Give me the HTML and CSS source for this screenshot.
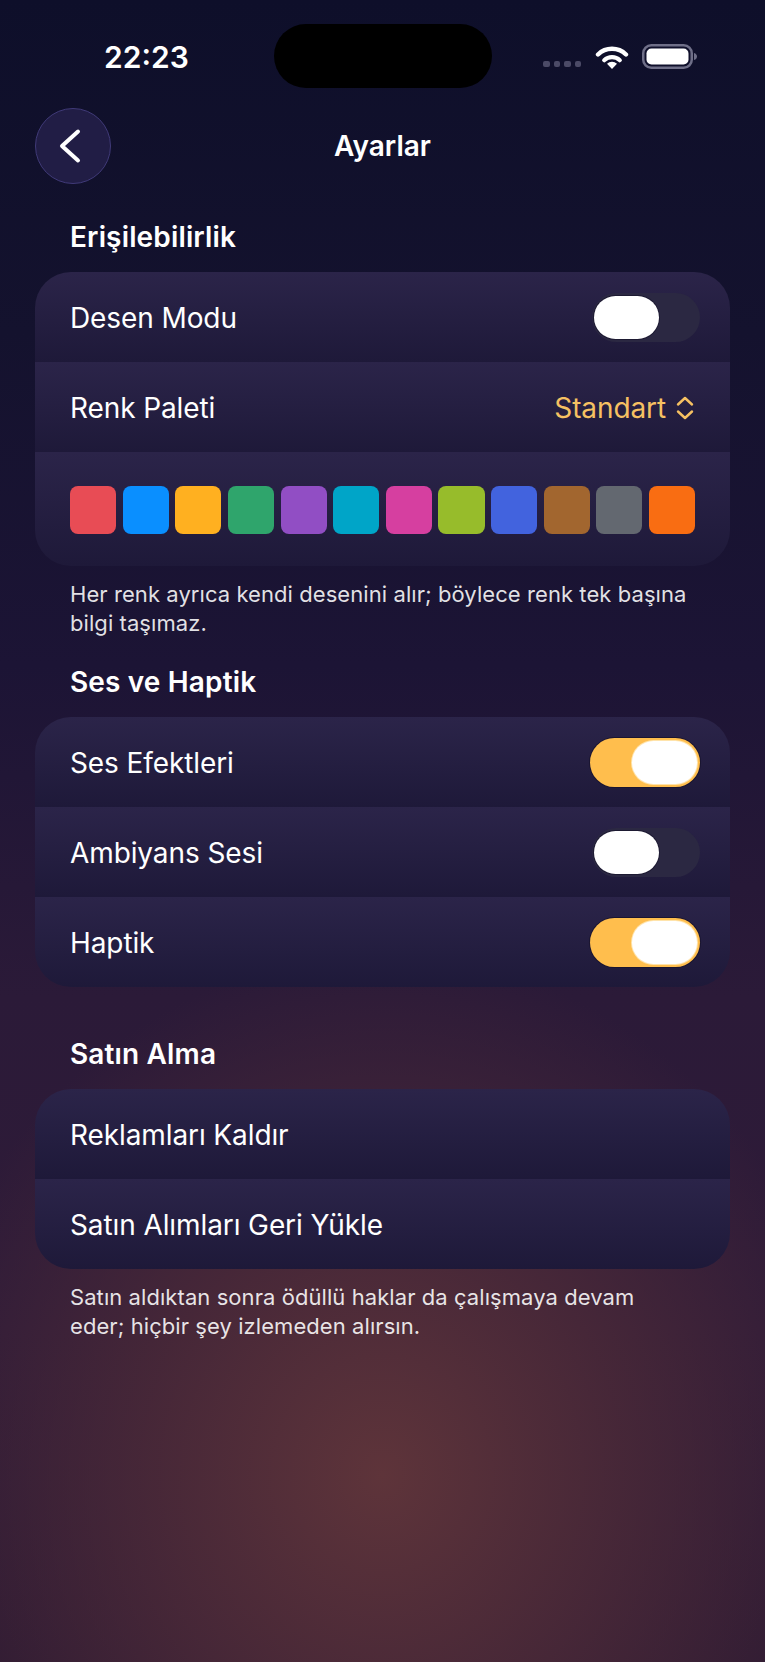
FILE: index.html
```html
<!DOCTYPE html>
<html lang="tr">
<head>
    <meta charset="UTF-8">
    <meta name="viewport" content="width=device-width, initial-scale=1.0">
    <title>Ayarlar</title>
    <link rel="stylesheet" href="styles.css">
</head>
<body>
    <div class="screen">
        <div class="status-bar">
            <div class="time">22:23</div>
            <div class="island"></div>
            <div class="signal"><i></i><i></i><i></i><i></i></div>
            <svg class="wifi" width="34" height="24" viewBox="0 0 34 24">
                <path d="M3 9.5A20 20 0 0 1 31 9.5" fill="none" stroke="#fff" stroke-width="4.4" stroke-linecap="round"/>
                <path d="M9.2 15.2A11.5 11.5 0 0 1 24.8 15.2" fill="none" stroke="#fff" stroke-width="4.2" stroke-linecap="round"/>
                <path d="M17 24L12 18.8A7.4 7.4 0 0 1 22 18.8Z" fill="#fff"/>
            </svg>
            <svg class="battery" width="55" height="26" viewBox="0 0 55 26">
                <rect x="1.250" y="1.250" width="48.500" height="22.500" rx="8" fill="none" stroke="#6f6f88" stroke-width="2.500"/>
                <rect x="4.500" y="4.500" width="42" height="16" rx="5" fill="#fff"/>
                <path d="M52 9c2 .5 3 2 3 3.500s-1 3-3 3.500z" fill="#6f6f88"/>
            </svg>
        </div>

        <div class="nav">
            <button class="back-button">
                <svg width="24" height="36" viewBox="0 0 24 36">
                    <path d="M20 3.500L4 18L20 32.500" fill="none" stroke="#fff" stroke-width="4" stroke-linecap="round" stroke-linejoin="round"/>
                </svg>
            </button>
            <div class="nav-title">Ayarlar</div>
            <div class="nav-spacer"></div>
        </div>

        <section class="section">
            <h2 class="section-title">Erişilebilirlik</h2>
            <div class="card">
                <div class="row">
                    <span>Desen Modu</span>
                    <div class="toggle"><div class="knob"></div></div>
                </div>
                <div class="row">
                    <span>Renk Paleti</span>
                    <div class="picker">
                        <span>Standart</span>
                        <svg width="18" height="24" viewBox="0 0 18 24">
                            <path d="M2 8.500L9 2L16 8.500M2 15.500L9 22L16 15.500" fill="none" stroke="#f6c162" stroke-width="2.400" stroke-linecap="round" stroke-linejoin="round"/>
                        </svg>
                    </div>
                </div>
                <div class="swatches">
                    <div class="swatch red"></div>
                    <div class="swatch blue"></div>
                    <div class="swatch amber"></div>
                    <div class="swatch green"></div>
                    <div class="swatch purple"></div>
                    <div class="swatch cyan"></div>
                    <div class="swatch pink"></div>
                    <div class="swatch lime"></div>
                    <div class="swatch indigo"></div>
                    <div class="swatch brown"></div>
                    <div class="swatch gray"></div>
                    <div class="swatch orange"></div>
                </div>
            </div>
            <p class="note">Her renk ayrıca kendi desenini alır; böylece renk tek başına bilgi taşımaz.</p>
        </section>

        <section class="section section-bare">
            <h2 class="section-title">Ses ve Haptik</h2>
            <div class="card">
                <div class="row">
                    <span>Ses Efektleri</span>
                    <div class="toggle on"><div class="knob"></div></div>
                </div>
                <div class="row">
                    <span>Ambiyans Sesi</span>
                    <div class="toggle"><div class="knob"></div></div>
                </div>
                <div class="row">
                    <span>Haptik</span>
                    <div class="toggle on"><div class="knob"></div></div>
                </div>
            </div>
        </section>

        <section class="section">
            <h2 class="section-title">Satın Alma</h2>
            <div class="card">
                <div class="row"><span>Reklamları Kaldır</span></div>
                <div class="row"><span>Satın Alımları Geri Yükle</span></div>
            </div>
            <p class="note">Satın aldıktan sonra ödüllü haklar da çalışmaya devam eder; hiçbir şey izlemeden alırsın.</p>
        </section>
    </div>
</body>
</html>
```

FILE: styles.css
```css
* {box-sizing: border-box;}
body {
    margin: 0;
    background: #0f0f2a;
    font-family: Inter, "Noto Sans", sans-serif;
    color: #fff;
}
.screen {
    width: 765px;
    height: 1662px;
    overflow: hidden;
    background:
        radial-gradient(ellipse 480px 520px at 382px 1475px, rgba(94, 52, 58, 1) 0%, rgba(76, 42, 56, 0.8) 50%, rgba(60, 32, 56, 0) 100%),
        linear-gradient(180deg, #0e0f2a 0%, #14122e 20%, #1c1435 40%, #2b1a38 60%, #2f1b38 80%, #2d1a33 100%);
}

/* status bar */
.status-bar {
    display: flex;
    align-items: center;
    height: 64px;
    margin-top: 24px;
    padding-left: 104px;
}
.time {
    width: 84px;
    font-size: 30px;
    font-weight: 600;
    white-space: nowrap;
    margin-top: 2px;
}
.island {
    width: 218px;
    height: 64px;
    margin-left: 86px;
    border-radius: 32px;
    background: #000;
}
.signal {
    display: flex;
    gap: 4px;
    margin-left: 51px;
    margin-top: 16px;
}
.signal i {
    width: 6.500px;
    height: 6.500px;
    border-radius: 2px;
    background: #4b4a66;
}
.wifi {
    margin-left: 14px;
    margin-top: 2px;
}
.battery {
    margin-left: 13px;
    margin-top: 2px;
}

/* nav */
.nav {
    display: flex;
    align-items: center;
    margin-top: 20px;
    padding: 0 35px;
}
.back-button {
    display: flex;
    align-items: center;
    justify-content: center;
    width: 76px;
    height: 76px;
    padding: 0 6px 0 0;
    border: 1.500px solid #403a78;
    border-radius: 50%;
    background: #211d45;
}
.nav-title {
    flex: 1;
    text-align: center;
    font-size: 28px;
    font-weight: 600;
}
.nav-spacer {width: 76px;}

/* sections */
.section {
    margin-top: 27px;
    padding: 0 35px;
}
.section:first-of-type {margin-top: 36px;}
.section-bare {margin-bottom: 50px;}
.section-title {
    margin: 0 0 18px;
    padding-left: 35px;
    font-size: 28px;
    line-height: 34px;
    font-weight: 600;
    letter-spacing: 0.15px;
}
.card {
    border-radius: 36px;
    overflow: hidden;
}
.row {
    display: flex;
    align-items: center;
    justify-content: space-between;
    height: 90px;
    padding: 2px 30px 0 35px;
    font-size: 28px;
    letter-spacing: -0.1px;
    background: linear-gradient(180deg, #2b2449 0%, #1e1939 100%);
}
.picker {
    display: flex;
    align-items: center;
    gap: 10px;
    margin-right: 6px;
    color: #f6c162;
}
.toggle {
    width: 108px;
    height: 49px;
    margin-top: -2px;
    padding: 3px 0 3px 2px;
    border-radius: 25px;
    background: #2b2842;
}
.knob {
    width: 65px;
    height: 43px;
    border-radius: 22px;
    background: #fff;
    box-shadow: 0 0 0 1px rgba(20, 16, 40, 0.6);
}
.toggle.on {
    width: 110px;
    padding: 3px;
    background: #ffbe4d;
    box-shadow: 0 0 0 1px #1a1530;
}
.toggle.on .knob {
    margin-left: auto;
    box-shadow: 0 0 0 1px #ffe4ac;
}

/* swatches */
.swatches {
    display: grid;
    grid-template-columns: repeat(12, 1fr);
    gap: 6.500px;
    height: 114px;
    padding: 34px 35px 32px;
    background: linear-gradient(180deg, #2b2449 0%, #1e1939 100%);
}
.swatch {border-radius: 8px;}
.red {background: #e84c55;}
.blue {background: #0a8fff;}
.amber {background: #ffb020;}
.green {background: #2fa56c;}
.purple {background: #914ec4;}
.cyan {background: #00a5c8;}
.pink {background: #d63fa0;}
.lime {background: #97bc2b;}
.indigo {background: #4263de;}
.brown {background: #a2662f;}
.gray {background: #636870;}
.orange {background: #f96d12;}

.note {
    margin: 14px 0 0;
    padding: 0 43px 0 35px;
    font-size: 22px;
    line-height: 29px;
    letter-spacing: 0.07px;
    color: rgba(255, 255, 255, 0.88);
}
```
